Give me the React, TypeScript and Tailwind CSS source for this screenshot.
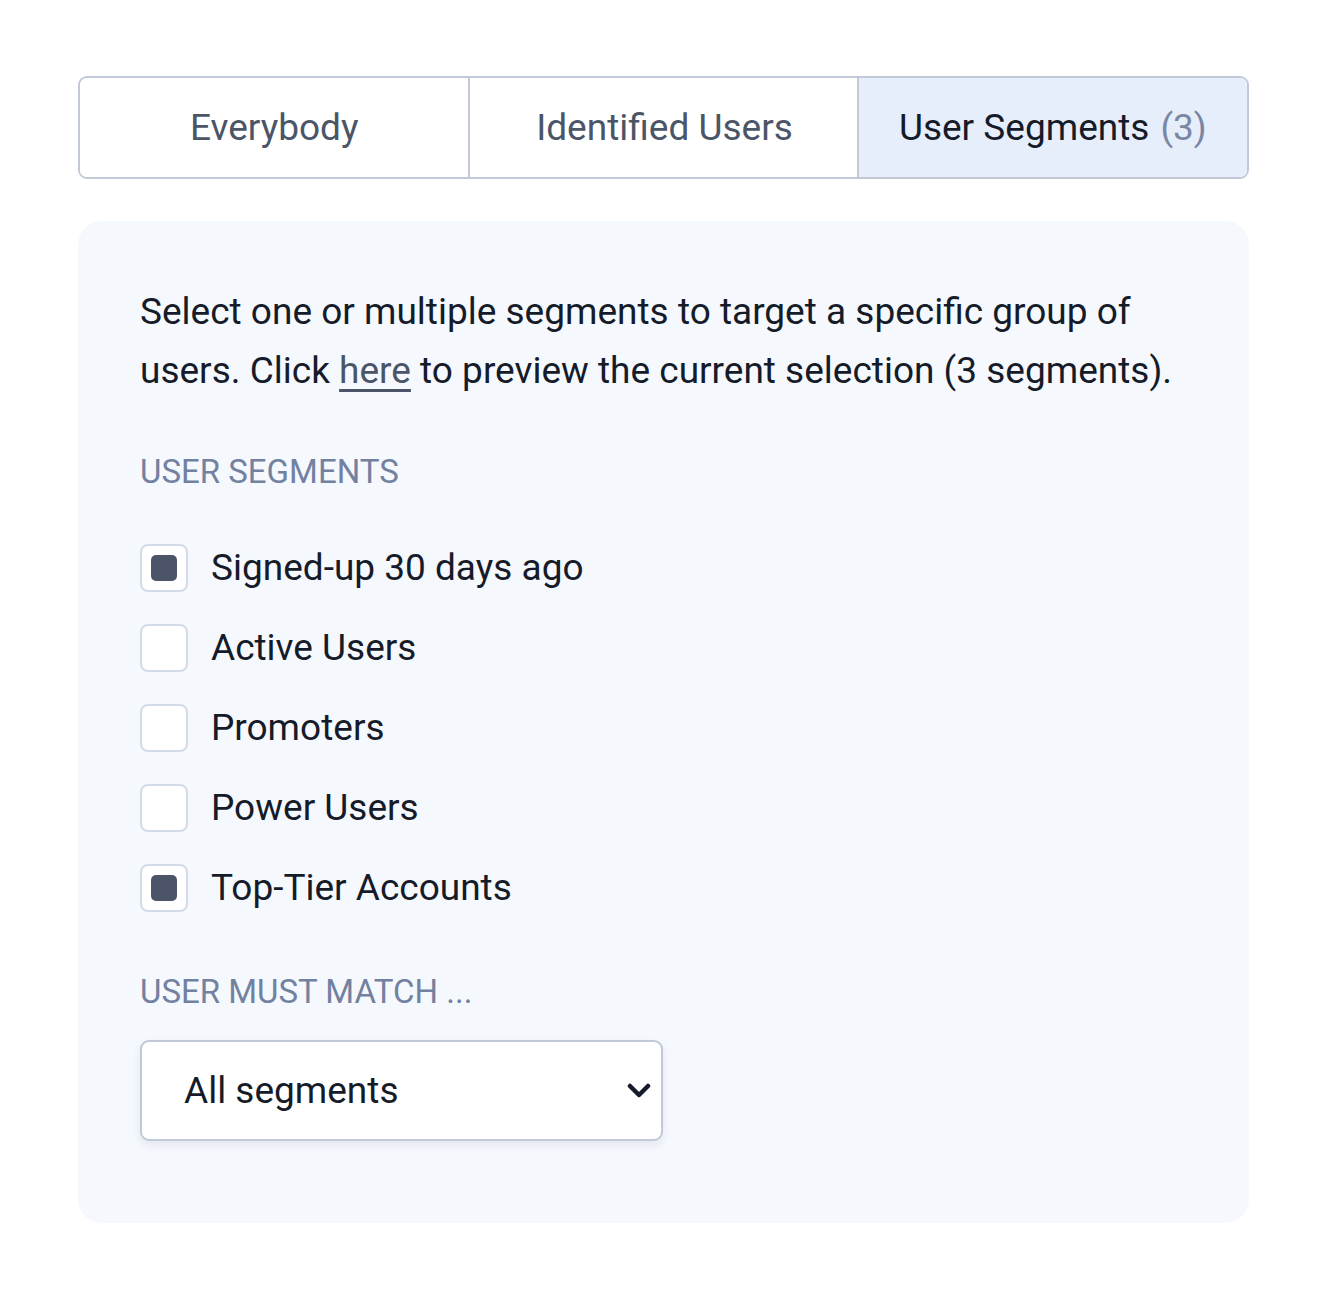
import React from "react";

const tabs = [
    { label: "Everybody" },
    { label: "Identified Users" },
    { label: "User Segments", count: 3, active: true },
];

const segments = [
    { name: "Signed-up 30 days ago", checked: true },
    { name: "Active Users", checked: false },
    { name: "Promoters", checked: false },
    { name: "Power Users", checked: false },
    { name: "Top-Tier Accounts", checked: true },
];

function Checkbox({ checked }: { checked: boolean }) {
    return (
        <span className="flex h-[48px] w-[48px] shrink-0 items-center justify-center rounded-[8px] border-2 border-[#d3dbe9] bg-white">
            {checked && <span className="h-[26px] w-[26px] rounded-[5px] bg-[#4b5469]" />}
        </span>
    );
}

export default function App() {
    return (
        <div className="min-h-[1300px] bg-white px-[78px] pt-[76px]" style={{ fontFamily: "Roboto, 'Liberation Sans', sans-serif" }}>
            <div className="flex h-[103px] w-[1171px] overflow-hidden rounded-[9px] border-2 border-[#c1c9d9]">
                {tabs.map((t, i) => (
                    <div
                        key={t.label}
                        className={
                            "flex flex-1 items-center justify-center text-[37px] " +
                            (i > 0 ? "border-l-2 border-[#c1c9d9] " : "") +
                            (t.active ? "bg-[#e7eefb] text-[#151b28] border-2 border-[#a0abc0] -m-[2px]" : "bg-white text-[#4b5568]")
                        }
                    >
                        {t.label}
                        {t.count !== undefined && <span className="ml-[11px] text-[#7a87a3]">({t.count})</span>}
                    </div>
                ))}
            </div>

            <div className="mt-[42px] w-[1171px] rounded-[24px] bg-[#f5f8fd] px-[62px] pt-[61px] pb-[82px]">
                <p className="text-[37px] leading-[59px] text-[#151b28]">
                    Select one or multiple segments to target a specific group of users. Click{" "}
                    <a href="#" className="text-[#4b5568] underline underline-offset-[6px]">here</a> to preview the current selection (3 segments).
                </p>

                <div className="mt-[52px] text-[33px] leading-[40px] text-[#7381a0]">USER SEGMENTS</div>

                <div className="mt-[52px] flex flex-col gap-[32px]">
                    {segments.map((s) => (
                        <label key={s.name} className="flex h-[48px] items-center gap-[23px] text-[37px] text-[#151b28]">
                            <Checkbox checked={s.checked} />
                            <span className="leading-[52px]">{s.name}</span>
                        </label>
                    ))}
                </div>

                <div className="mt-[60px] text-[33px] leading-[40px] text-[#7381a0]">USER MUST MATCH ...</div>

                <div className="mt-[28px] flex h-[101px] w-[523px] items-center justify-between rounded-[9px] border-2 border-[#c1c9d9] bg-white pl-[42px] pr-[10px] shadow-[0_4px_10px_rgba(30,40,70,0.08)]">
                    <span className="text-[37px] text-[#151b28]">All segments</span>
                    <svg width="24" height="16" viewBox="0 0 24 16" fill="none">
                        <polyline points="3,3 12,12 21,3" stroke="#151b28" strokeWidth="4.5" strokeLinecap="round" strokeLinejoin="round" />
                    </svg>
                </div>
            </div>
        </div>
    );
}
